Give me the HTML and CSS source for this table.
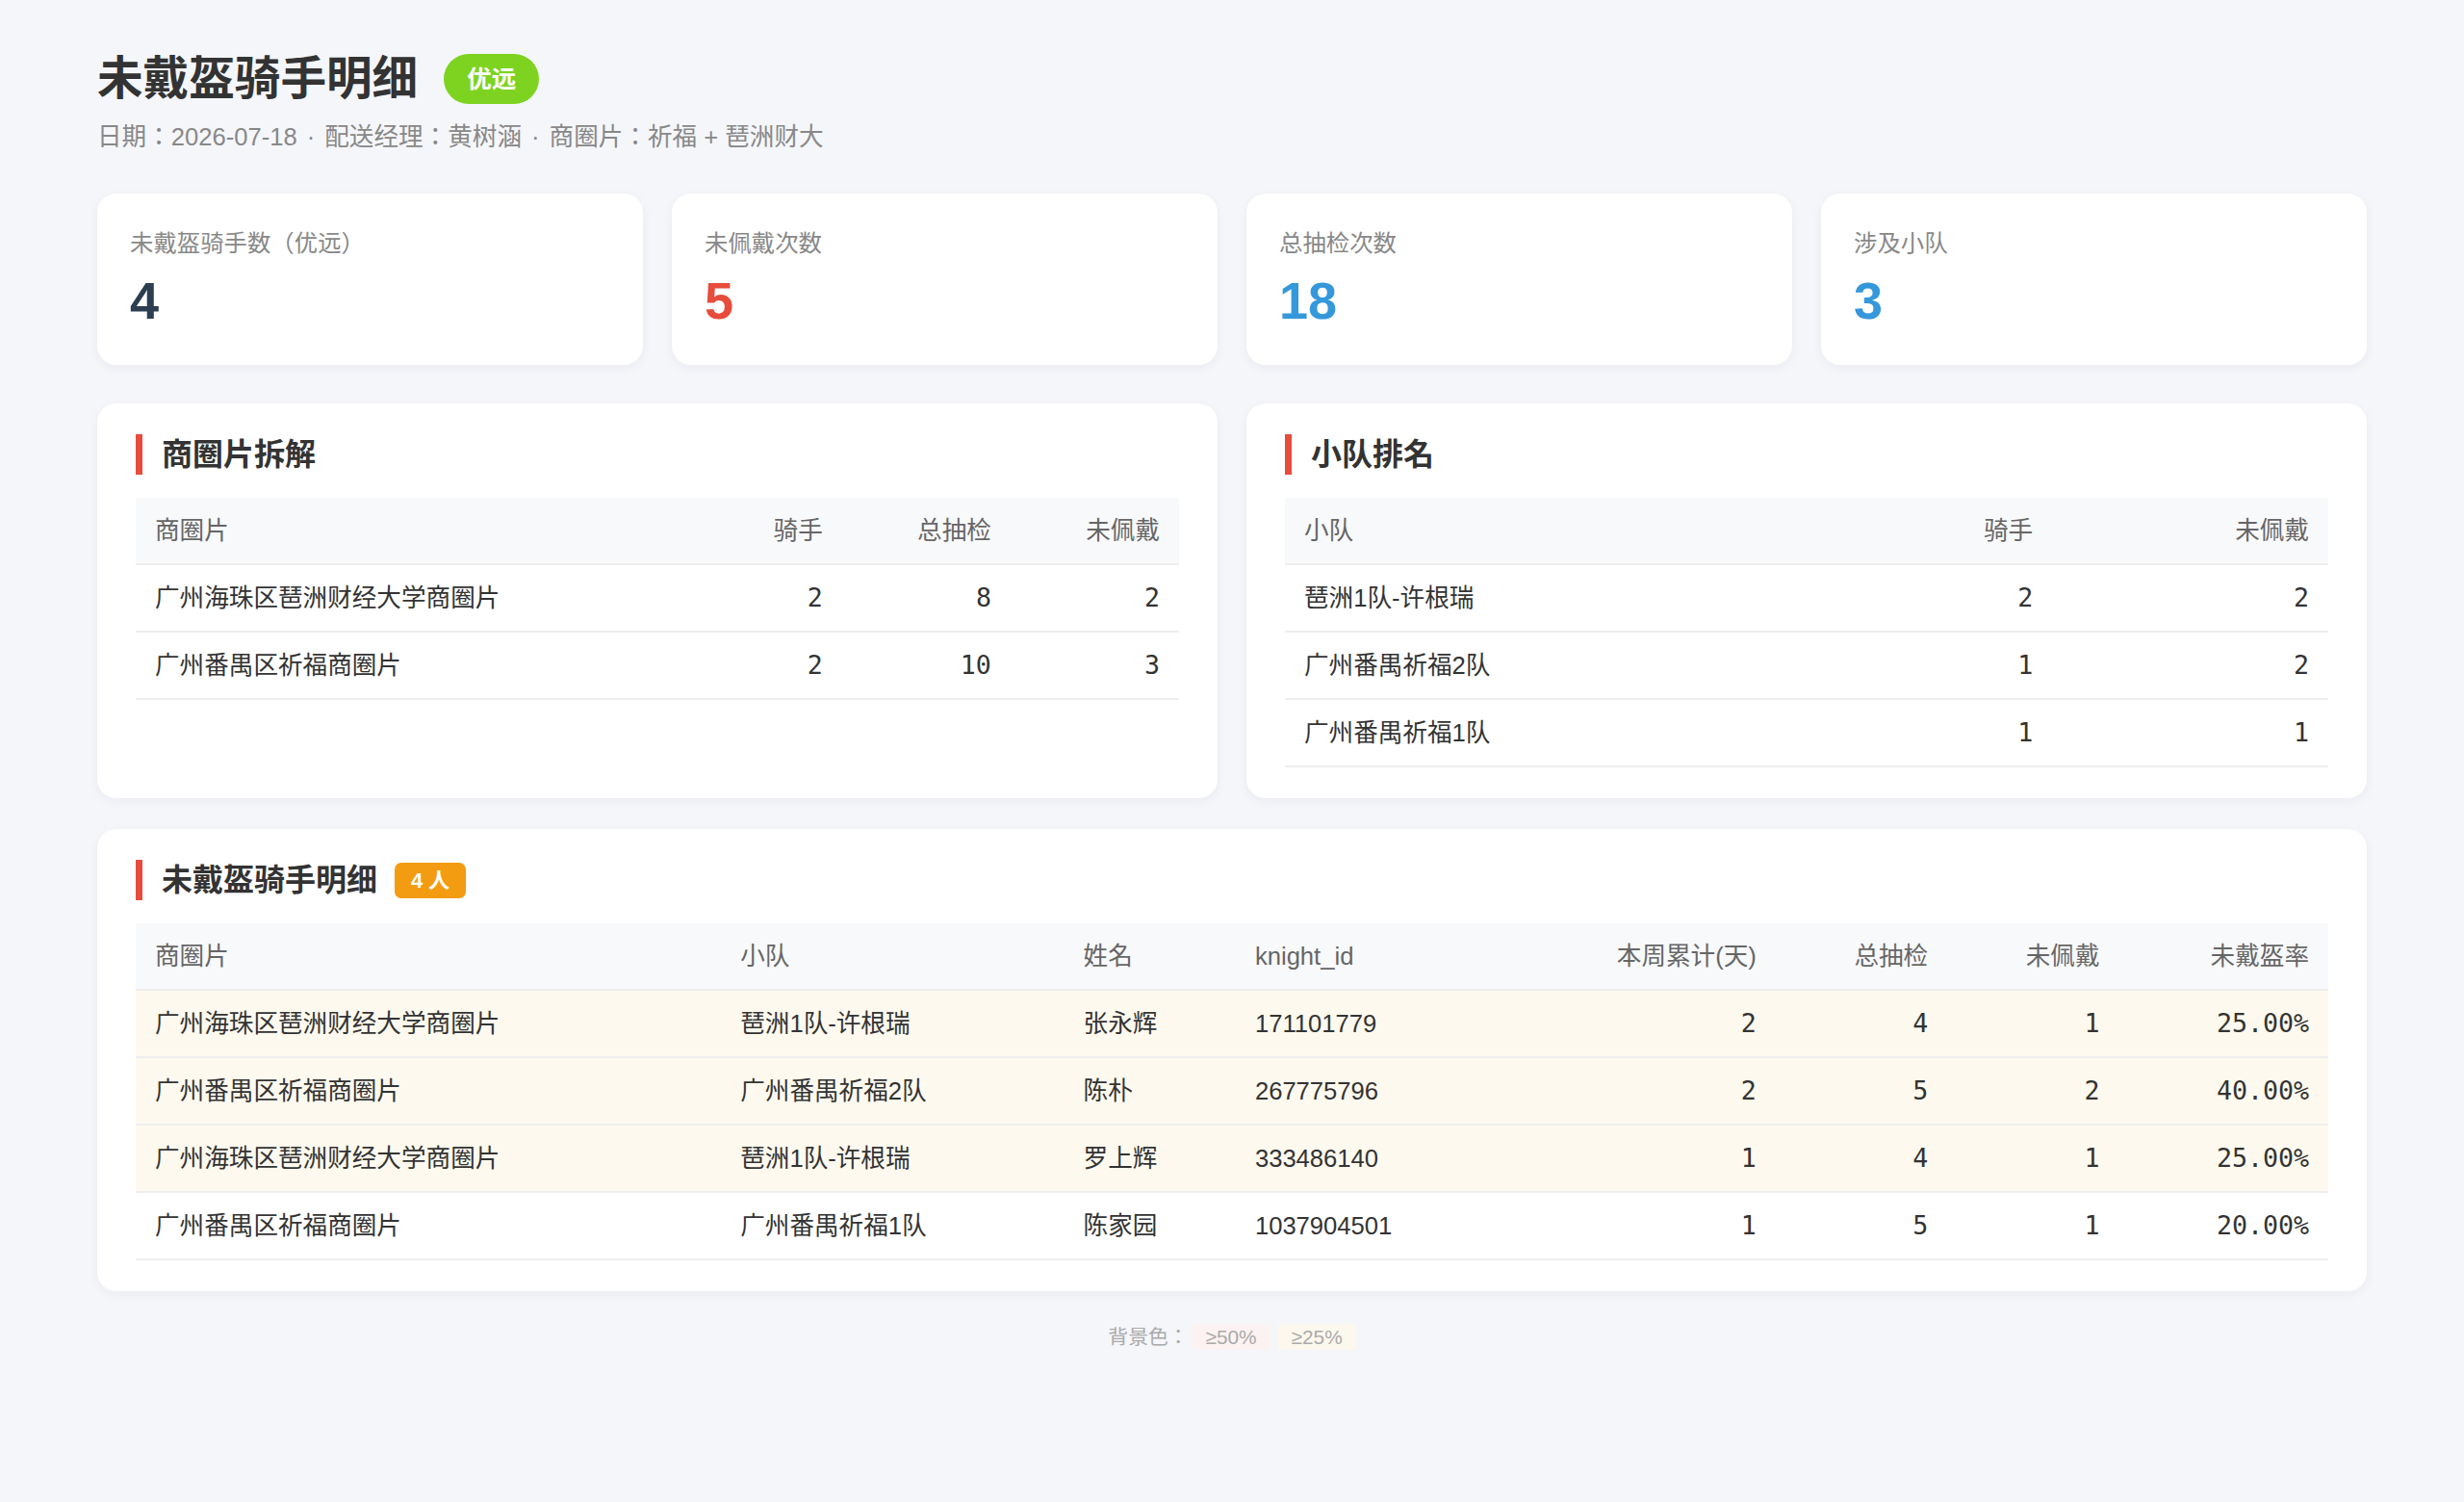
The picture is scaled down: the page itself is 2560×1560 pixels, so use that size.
FILE: index.html
```html
<!DOCTYPE html>
<html>
<head>
<meta charset="utf-8">
<title>未戴盔骑手明细</title>
<link rel="stylesheet" href="styles.css">
</head>
<body>
<div class="page">
  <header class="head">
    <div class="title-row">
      <h1 class="title">未戴盔骑手明细</h1>
      <span class="brand-badge">优远</span>
    </div>
    <p class="subtitle">日期：2026-07-18<span class="sep">·</span>配送经理：黄树涵<span class="sep">·</span>商圈片：祈福 + 琶洲财大</p>
  </header>

  <section class="stats">
    <div class="stat-card">
      <div class="stat-label">未戴盔骑手数（优远）</div>
      <div class="stat-value v-dark">4</div>
    </div>
    <div class="stat-card">
      <div class="stat-label">未佩戴次数</div>
      <div class="stat-value v-red">5</div>
    </div>
    <div class="stat-card">
      <div class="stat-label">总抽检次数</div>
      <div class="stat-value v-blue">18</div>
    </div>
    <div class="stat-card">
      <div class="stat-label">涉及小队</div>
      <div class="stat-value v-blue">3</div>
    </div>
  </section>

  <div class="two-col">
    <section class="panel">
      <h2 class="panel-title">商圈片拆解</h2>
      <table class="data">
        <thead>
          <tr><th>商圈片</th><th class="r">骑手</th><th class="r">总抽检</th><th class="r">未佩戴</th></tr>
        </thead>
        <tbody>
          <tr><td>广州海珠区琶洲财经大学商圈片</td><td class="num">2</td><td class="num">8</td><td class="num">2</td></tr>
          <tr><td>广州番禺区祈福商圈片</td><td class="num">2</td><td class="num">10</td><td class="num">3</td></tr>
        </tbody>
      </table>
    </section>
    <section class="panel">
      <h2 class="panel-title">小队排名</h2>
      <table class="data">
        <thead>
          <tr><th>小队</th><th class="r">骑手</th><th class="r">未佩戴</th></tr>
        </thead>
        <tbody>
          <tr><td>琶洲1队-许根瑞</td><td class="num">2</td><td class="num">2</td></tr>
          <tr><td>广州番禺祈福2队</td><td class="num">1</td><td class="num">2</td></tr>
          <tr><td>广州番禺祈福1队</td><td class="num">1</td><td class="num">1</td></tr>
        </tbody>
      </table>
    </section>
  </div>

  <section class="panel">
    <h2 class="panel-title">未戴盔骑手明细<span class="count-badge">4 人</span></h2>
    <table class="data">
      <thead>
        <tr>
          <th>商圈片</th><th>小队</th><th>姓名</th><th>knight_id</th>
          <th class="r">本周累计(天)</th><th class="r">总抽检</th><th class="r">未佩戴</th><th class="r">未戴盔率</th>
        </tr>
      </thead>
      <tbody>
        <tr class="warn">
          <td>广州海珠区琶洲财经大学商圈片</td><td>琶洲1队-许根瑞</td><td>张永辉</td><td>171101779</td>
          <td class="num">2</td><td class="num">4</td><td class="num">1</td><td class="num">25.00%</td>
        </tr>
        <tr class="warn">
          <td>广州番禺区祈福商圈片</td><td>广州番禺祈福2队</td><td>陈朴</td><td>267775796</td>
          <td class="num">2</td><td class="num">5</td><td class="num">2</td><td class="num">40.00%</td>
        </tr>
        <tr class="warn">
          <td>广州海珠区琶洲财经大学商圈片</td><td>琶洲1队-许根瑞</td><td>罗上辉</td><td>333486140</td>
          <td class="num">1</td><td class="num">4</td><td class="num">1</td><td class="num">25.00%</td>
        </tr>
        <tr>
          <td>广州番禺区祈福商圈片</td><td>广州番禺祈福1队</td><td>陈家园</td><td>1037904501</td>
          <td class="num">1</td><td class="num">5</td><td class="num">1</td><td class="num">20.00%</td>
        </tr>
      </tbody>
    </table>
  </section>

  <div class="legend">背景色：<span class="chip chip-high">≥50%</span><span class="chip chip-mid">≥25%</span></div>
</div>
</body>
</html>
```

FILE: styles.css
```css
* { box-sizing: border-box; }

html, body {
  margin: 0;
  padding: 0;
  background: #f5f6fa;
}

body {
  font-family: "Liberation Sans", "Noto Sans CJK JP", sans-serif;
  color: #333;
}

.page {
  padding: 53px 101px 60px;
}

.head { margin: 0; }

.title-row {
  display: flex;
  align-items: center;
}

.title {
  margin: 0;
  font-size: 47.6px;
  line-height: 57px;
  font-weight: 700;
  color: #333;
}

.brand-badge {
  margin-left: 27px;
  height: 52px;
  padding: 0 24px;
  border-radius: 26px;
  background: #7ed321;
  color: #fff;
  font-size: 25.5px;
  font-weight: 700;
  line-height: 52px;
}

.subtitle {
  margin: 13px 0 0;
  font-size: 25.6px;
  line-height: 38px;
  color: #888;
}

.sep {
  margin: 0 10px;
}

.stats {
  margin-top: 40px;
  display: grid;
  grid-template-columns: repeat(4, 1fr);
  gap: 30px;
}

.stat-card {
  background: #fff;
  border-radius: 20px;
  padding: 34px;
  box-shadow: 0 3px 12px rgba(30, 40, 60, 0.05);
}

.stat-label {
  font-size: 24.4px;
  line-height: 36px;
  color: #888;
}

.stat-value {
  margin-top: 9px;
  font-size: 54px;
  line-height: 65px;
  font-weight: 700;
}

.v-dark { color: #2c3e50; }
.v-red { color: #e74c3c; }
.v-blue { color: #3498db; }

.two-col {
  margin-top: 40px;
  display: grid;
  grid-template-columns: 1fr 1fr;
  gap: 30px;
}

.panel {
  background: #fff;
  border-radius: 20px;
  padding: 32px 40px;
  box-shadow: 0 3px 12px rgba(30, 40, 60, 0.05);
}

.two-col + .panel { margin-top: 32px; }

.panel-title {
  display: flex;
  align-items: center;
  margin: 0 0 24px;
  border-left: 7px solid #e74c3c;
  padding-left: 20px;
  font-size: 32px;
  line-height: 42px;
  font-weight: 700;
  color: #333;
}

.count-badge {
  margin-left: 18px;
  height: 37px;
  padding: 0 17px;
  border-radius: 7px;
  background: #f39c12;
  color: #fff;
  font-size: 22px;
  line-height: 37px;
  font-weight: 700;
}

.data {
  width: 100%;
  border-collapse: collapse;
}

.data th {
  background: #f8f9fb;
  color: #666;
  font-weight: 400;
  font-size: 25.6px;
  line-height: 40px;
  padding: 14px 20px;
  text-align: left;
  border-bottom: 2px solid #eeeeee;
  white-space: nowrap;
}

.data td {
  font-size: 25.6px;
  line-height: 40px;
  padding: 14px 20px;
  color: #333;
  border-bottom: 2px solid #eeeeee;
  white-space: nowrap;
}

.data th.r { text-align: right; }

.data td.num {
  text-align: right;
  font-family: "DejaVu Sans Mono", monospace;
  font-size: 26.6px;
}

.data tr.warn td { background: #fdf9ee; }

.legend {
  margin-top: 34px;
  text-align: center;
  font-size: 20.8px;
  line-height: 27px;
  color: #aaa;
}

.chip {
  display: inline-block;
  padding: 0 14px;
  border-radius: 4px;
  line-height: 27px;
}

.chip-high { background: #fdf2f2; margin-left: 4px; }
.chip-mid { background: #fdf8ee; margin-left: 8px; }
```
